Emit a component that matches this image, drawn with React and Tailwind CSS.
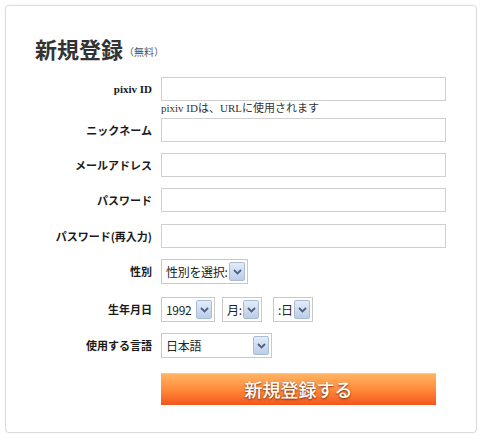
import React from 'react';

const LABEL_FONT = { fontFamily: '"Noto Sans CJK JP", "Noto Sans", sans-serif' };
const SERIF_FONT = { fontFamily: '"Liberation Serif", "Noto Sans CJK JP", serif' };

function Arrow() {
  return (
    <span className="flex h-[19px] w-[16px] shrink-0 items-center justify-center rounded-[2px] border border-[#a9bcd6] bg-gradient-to-b from-[#e3ecf8] to-[#bccde6]">
      <svg width="9" height="6" viewBox="0 0 9 6">
        <path d="M1 1 L4.5 4.5 L8 1" fill="none" stroke="#4d6185" strokeWidth="1.8" />
      </svg>
    </span>
  );
}

function FakeSelect({ label, width, className = '' }) {
  return (
    <div
      className={`flex h-[25px] shrink-0 items-center justify-between whitespace-nowrap border border-[#c9c9c9] bg-white pl-[4px] pr-[2px] text-[12px] text-[#222] ${width} ${className}`}
      style={LABEL_FONT}
    >
      <span className="whitespace-nowrap tracking-[-0.3px]">{label}</span>
      <Arrow />
    </div>
  );
}

function Row({ label, children, className = '', serif = false }) {
  return (
    <div className={`flex items-center ${className}`}>
      <div
        className="w-[155px] shrink-0 pr-[9px] text-right text-[11px] font-bold text-[#1a1a1a]"
        style={serif ? SERIF_FONT : LABEL_FONT}
      >
        {label}
      </div>
      {children}
    </div>
  );
}

function TextInput() {
  return <input type="text" className="h-[24px] w-[285px] shrink-0 border border-[#cfcfcf] bg-white" />;
}

export default function App() {
  return (
    <div className="h-[435px] w-[482px] bg-white p-[5px]">
      <div className="h-[428px] w-[472px] rounded-[4px] border border-[#dcdcdc] bg-white shadow-[0_0_2px_rgba(0,0,0,0.08)]">
        <div className="flex items-end pl-[29px] pt-[27px]" style={LABEL_FONT}>
          <span className="text-[22px] font-bold leading-[30px] text-[#333]">新規登録</span>
          <span className="mb-[4px] ml-[1px] text-[10px] text-[#555]">（無料）</span>
        </div>

        <Row label="pixiv ID" serif className="mt-[14px]">
          <TextInput />
        </Row>
        <div className="ml-[155px] h-[15px] text-[11px] leading-[15px] text-[#333]" style={SERIF_FONT}>
          pixiv IDは、URLに使用されます
        </div>

        <Row label="ニックネーム" className="mt-[2px]">
          <TextInput />
        </Row>
        <Row label="メールアドレス" className="mt-[11px]">
          <TextInput />
        </Row>
        <Row label="パスワード" className="mt-[11px]">
          <TextInput />
        </Row>
        <Row label="パスワード(再入力)" className="mt-[12px]">
          <TextInput />
        </Row>

        <Row label="性別" className="mt-[11px]">
          <FakeSelect label="性別を選択:" width="w-[87px]" />
        </Row>

        <Row label="生年月日" className="mt-[13px]">
          <div className="flex items-center gap-[7px]">
            <FakeSelect label="1992" width="w-[54px]" />
            <FakeSelect label="月:" width="w-[40px]" />
            <FakeSelect label=":日" width="w-[40px]" className="ml-[4px]" />
          </div>
        </Row>

        <Row label="使用する言語" className="mt-[11px]">
          <FakeSelect label="日本語" width="w-[111px]" />
        </Row>

        <div className="ml-[155px] mt-[15px]">
          <button
            type="button"
            className="flex h-[32px] w-[275px] items-center justify-center border-t border-[#ffc88a] bg-gradient-to-b from-[#ffb462] via-[#ff8a3a] to-[#f2551a] text-[18px] font-medium text-white [text-shadow:0_1px_2px_rgba(90,30,0,0.85)]"
            style={LABEL_FONT}
          >
            新規登録する
          </button>
        </div>
      </div>
    </div>
  );
}
